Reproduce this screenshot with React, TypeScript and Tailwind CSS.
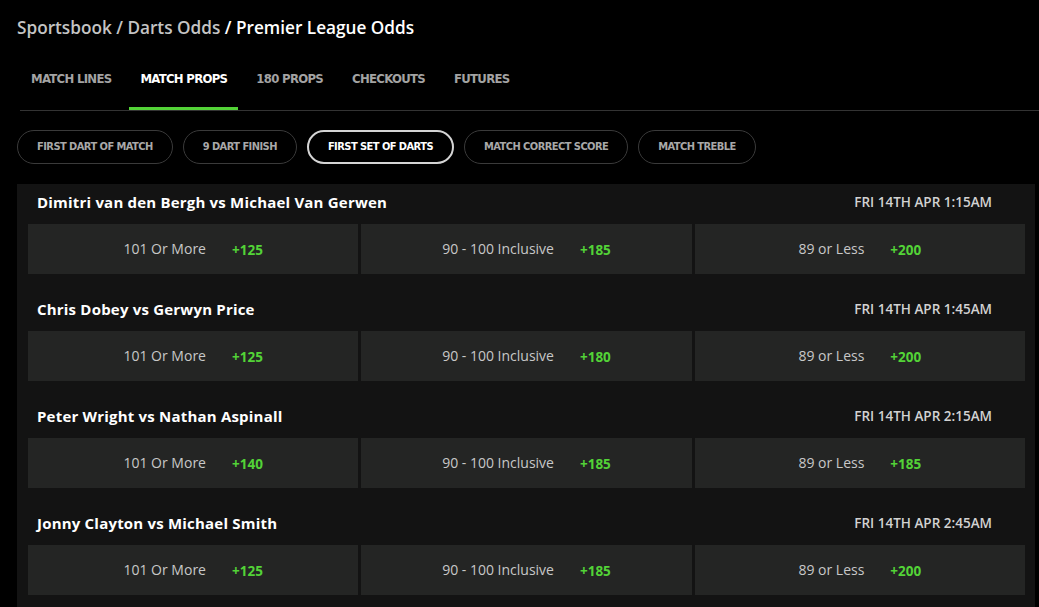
import React from "react";

const OPEN = { fontFamily: '"Open Sans", "Noto Sans", sans-serif' };
const COND = { fontFamily: '"Liberation Sans Narrow", "DejaVu Sans Condensed", "Roboto Condensed", sans-serif' };

const tabs = ["MATCH LINES", "MATCH PROPS", "180 PROPS", "CHECKOUTS", "FUTURES"];
const pills = ["FIRST DART OF MATCH", "9 DART FINISH", "FIRST SET OF DARTS", "MATCH CORRECT SCORE", "MATCH TREBLE"];

const games = [
  { name: "Dimitri van den Bergh vs Michael Van Gerwen", date: "FRI 14TH APR 1:15AM", odds: ["+125", "+185", "+200"] },
  { name: "Chris Dobey vs Gerwyn Price", date: "FRI 14TH APR 1:45AM", odds: ["+125", "+180", "+200"] },
  { name: "Peter Wright vs Nathan Aspinall", date: "FRI 14TH APR 2:15AM", odds: ["+140", "+185", "+185"] },
  { name: "Jonny Clayton vs Michael Smith", date: "FRI 14TH APR 2:45AM", odds: ["+125", "+185", "+200"] },
];
const labels = ["101 Or More", "90 - 100 Inclusive", "89 or Less"];

export default function App() {
  return (
    <div className="w-[1039px] h-[607px] bg-black overflow-hidden pt-[15px]" style={OPEN}>
      <div className="pl-[17px] text-[17.2px] font-semibold leading-[26px]">
        <span className="text-[#c4c4c4]">Sportsbook / Darts Odds </span>
        <span className="text-white">/ Premier League Odds</span>
      </div>

      <div className="ml-[20px] mt-[12px] flex gap-[7px] border-b border-[#333333]">
        {tabs.map((t, i) => (
          <div
            key={t}
            className={`h-[57px] flex items-center pb-[3px] px-[11px] border-b-[3px] text-[13px] tracking-[-0.7px] font-bold ${
              i === 1 ? "border-[#53d337] text-white" : "border-transparent text-[#a3a3a3]"
            }`}
            style={COND}
          >
            {t}
          </div>
        ))}
      </div>

      <div className="ml-[17px] mt-[19px] flex gap-[10px]">
        {pills.map((p, i) => (
          <div
            key={p}
            className={`h-[34px] flex items-center px-[19px] rounded-full text-[11px] tracking-[-0.55px] font-bold ${
              i === 2 ? "border-2 border-[#d4d4d4] text-white" : "border border-[#3a3a3a] text-[#a8a8a8]"
            }`}
            style={COND}
          >
            {p}
          </div>
        ))}
      </div>

      <div className="ml-[17px] mr-[4px] mt-[20px] bg-[#131313] pl-[11px] pr-[10px] pb-[20px]">
        {games.map((g) => (
          <div key={g.name} className="mb-[17px]">
            <div className="h-[40px] flex items-center justify-between pb-[4px] pl-[9px] pr-[33px]">
              <span className="text-[15px] font-bold text-white tracking-[0.2px]">{g.name}</span>
              <span className="text-[13.5px] font-semibold text-[#d2d2d2]">{g.date}</span>
            </div>
            <div className="grid grid-cols-3 gap-[3px]">
              {labels.map((l, j) => (
                <div key={l} className="h-[50px] bg-[#242524] flex items-center justify-center gap-[26px]">
                  <span className="text-[14px] text-[#c8c8c8] pb-[1px]">{l}</span>
                  <span className="text-[13.5px] font-bold text-[#53d337] pt-[2px]">{g.odds[j]}</span>
                </div>
              ))}
            </div>
          </div>
        ))}
      </div>
    </div>
  );
}
